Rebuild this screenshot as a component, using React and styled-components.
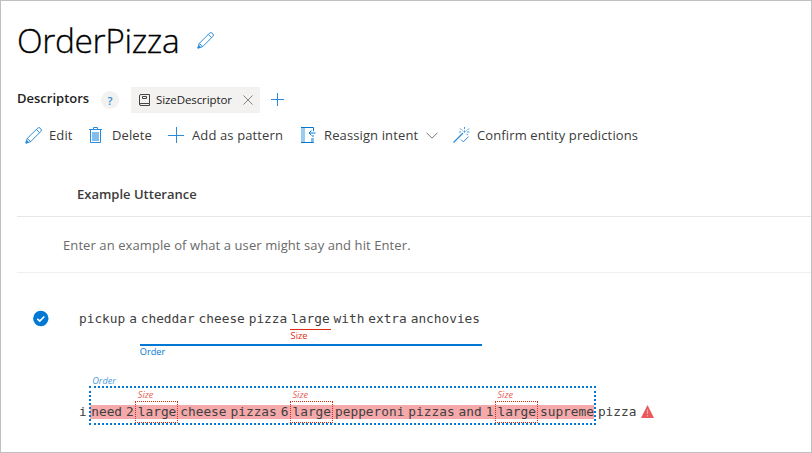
import React from 'react';
import styled, { createGlobalStyle, css } from 'styled-components';

const Global = createGlobalStyle`
  *, *::before, *::after { box-sizing: border-box; }
  body { margin: 0; background: #fff; }
`;

const BLUE = '#0078d4';
const SOFT_BLUE = '#2b8bdb';
const RED = '#dd2c14';

const Page = styled.main`
  width: 812px;
  height: 453px;
  border: 1px solid #c0c0c0;
  overflow: hidden;
  display: flex;
  flex-direction: column;
  font-family: 'Open Sans', 'Noto Sans', sans-serif;
  font-size: 13px;
  color: #3b3b3b;
  white-space: nowrap;
  svg { display: block; flex: none; }
`;

const Header = styled.header`
  height: 78px;
  padding-left: 16px;
  display: flex;
  align-items: center;
  gap: 18px;
`;

const Title = styled.h1`
  margin: 0;
  width: 162px;
  font-size: 33.5px;
  font-weight: 300;
  line-height: 44px;
  letter-spacing: -0.35px;
  color: #000;
  -webkit-text-stroke: 0.3px #000;
`;

const DescriptorRow = styled.div`
  height: 41px;
  padding-left: 16px;
  display: flex;
  align-items: center;
`;

const DescriptorTitle = styled.h2`
  margin: -4px 0 0;
  width: 84px;
  font-size: 13px;
  line-height: 20px;
  font-weight: 600;
  letter-spacing: 0;
  color: #222;
`;

const Help = styled.span`
  width: 18px;
  height: 18px;
  border-radius: 50%;
  background: #f3f2f1;
  color: #2b88d8;
  font-size: 11px;
  line-height: 19px;
  font-weight: 600;
  text-align: center;
`;

const Chip = styled.div`
  width: 129px;
  height: 26px;
  margin: 0 11px 0 12px;
  padding: 0 6px 0 8px;
  background: #f3f2f1;
  display: flex;
  align-items: center;
  color: #222;
`;

const ChipText = styled.span`
  width: 93px;
  padding-left: 6px;
  font-size: 11.5px;
  line-height: 18px;
  letter-spacing: -0.1px;
`;

const Toolbar = styled.nav`
  height: 32px;
  padding: 0 0 2px 24px;
  display: flex;
  align-items: center;
`;

const Command = styled.button`
  width: ${(p) => p.$width}px;
  height: 28px;
  padding: 0;
  border: 0;
  background: none;
  display: flex;
  align-items: center;
  gap: ${(p) => p.$gap}px;
  font: inherit;
  line-height: 20px;
  letter-spacing: 0.12px;
  color: #3b3b3b;
`;

const TableHead = styled.div`
  height: 65px;
  margin-left: 16px;
  padding: 32px 0 0 60px;
  border-bottom: 1px solid #e6e6e6;
  font-weight: 600;
  line-height: 20px;
`;

const InputRow = styled.div`
  height: 56px;
  margin-left: 16px;
  padding: 18px 0 0 46px;
  border-bottom: 1px solid #f0f0f0;
  line-height: 20px;
  letter-spacing: 0.09px;
  color: #6a6a6a;
`;

const UtteranceRow = styled.div`
  height: ${(p) => p.$height}px;
  padding: ${(p) => p.$top}px 0 0 31px;
  display: flex;
  align-items: flex-start;
`;

const Status = styled.div`
  width: 47px;
  height: 17px;
  display: flex;
  align-items: center;
`;

const Words = styled.div`
  --word-gap: ${(p) => p.$gap}px;
  display: flex;
  gap: var(--word-gap);
  font-family: 'DejaVu Sans Mono', monospace;
  font-size: 12.8px;
  line-height: 18px;
  color: #404040;
`;

const Entity = styled.span`
  position: relative;
  margin-left: ${(p) => p.$shift || 0}px;
  display: flex;
  gap: var(--word-gap);
`;

const Underline = styled.span`
  position: absolute;
  left: -1px;
  right: -1.5px;
  top: ${(p) => p.$top}px;
  border-top: ${(p) => p.$weight}px solid ${(p) => p.$color};
`;

const Tag = styled.span`
  position: absolute;
  left: ${(p) => p.$left || 0}px;
  top: ${(p) => p.$top}px;
  font-family: 'Open Sans', sans-serif;
  font-size: 9.2px;
  line-height: 12px;
  color: ${(p) => p.$color};
  ${(p) => p.$italic && css`font-style: italic; opacity: 0.75;`}
`;

const Highlight = styled.span`
  position: absolute;
  left: -1px;
  right: 0;
  top: 2px;
  height: 14px;
  background: #f5a9ab;
`;

const DottedBox = styled.span`
  position: absolute;
  left: -2.3px;
  right: ${(p) => p.$right}px;
  top: ${(p) => p.$top}px;
  height: ${(p) => p.$height}px;
  border: ${(p) => p.$weight}px dotted ${(p) => p.$color};
`;

const Word = styled.span`
  position: relative;
`;

const WarningSlot = styled.span`
  padding: 2px 0 0 1px;
`;

const Pencil = ({ size }) => (
  <svg width={size} height={size} viewBox="0 0 17 17" fill="none" stroke={SOFT_BLUE} strokeWidth="1">
    <path d="M.9 16.100L2.300 11.400 12.300 1.400a2.300 2.300 0 0 1 3.300 3.300L5.600 14.700zM2.300 11.400l3.300 3.300M11.300 2.400l3.300 3.300" />
    <path d="M.9 16.100l.8-2.600 1.800 1.800z" fill={BLUE} />
  </svg>
);

const Plus = ({ size }) => (
  <svg width={size} height={size} viewBox={`0 0 ${size} ${size}`} stroke={SOFT_BLUE}>
    <path d={`M${Math.floor(size / 2) + 0.5} 0v${size}M0 ${Math.floor(size / 2) + 0.5}h${size}`} />
  </svg>
);

const Book = () => (
  <svg width="11" height="12" viewBox="0 0 11 12" fill="none" stroke="#444">
    <path d="M10.500 9.500V.5H2Q.5.5.5 2v8q0 1.500 1.500 1.500h8.500M.5 10.500Q.5 9.500 2 9.500h8.500v2M3.500 2.500h4v2h-4z" />
  </svg>
);

const Close = () => (
  <svg width="10" height="10" viewBox="0 0 10 10" stroke="#777" strokeWidth=".9">
    <path d="M.5.5l9 9M9.500.5l-9 9" />
  </svg>
);

const Trash = () => (
  <svg width="13" height="16" viewBox="0 0 13 16" fill="none" stroke={SOFT_BLUE}>
    <path d="M0 2.500h13M4.500 2V.5h4V2M1.500 3v12.500h10V3" />
    <path d="M3 5h7v9H3z" fill="#83bdec" stroke="none" />
  </svg>
);

const Reassign = () => (
  <svg width="15" height="16" viewBox="0 0 15 16" fill="none" stroke={BLUE}>
    <path d="M0 0h4v16H0z" fill="#9ccbf0" stroke="none" />
    <path d="M0 .5h12.500V4M0 15.500h12.500V14M14.500 6H8M10.500 3.500L8 6l2.500 2.500" />
    <path d="M11 8h2v2h-2zM10 11h3v4h-3z" fill="#83bdec" stroke="none" />
  </svg>
);

const Chevron = () => (
  <svg width="12" height="7" viewBox="0 0 12 7" fill="none" stroke="#666" strokeWidth=".9">
    <path d="M.5.700l5.500 5.500L11.500.700" />
  </svg>
);

const Wand = () => (
  <svg width="17" height="16" viewBox="0 0 17 16" fill="none" stroke={SOFT_BLUE}>
    <path d="M.5 15.500L10 6" strokeWidth="1.200" />
    <path d="M8 12.500l2.300 2.300 5.200-5.200" />
    <path d="M11.500 0v2M7 1.500l1.500 1.500M16 1.500l-1.500 1.500M6 5h2M14 5h2.500M11.500 3.500v2M13.500 7l1.500 1M9.500 3.500l1 1M13.500 3.500l-1 1" strokeWidth=".9" />
  </svg>
);

const Check = () => (
  <svg width="17" height="17" viewBox="0 0 17 17">
    <circle cx="8.800" cy="8.500" r="7.700" fill={BLUE} />
    <path d="M5.300 8.800l2.500 2.300 4.500-4.600" fill="none" stroke="#fff" strokeWidth="1.700" />
  </svg>
);

const Warning = () => (
  <svg width="13" height="13" viewBox="0 0 13 13">
    <path d="M6.500 0L13 13H0z" fill="#e9585b" />
    <path d="M6.500 4.500v4.500M6.500 10v1.500" stroke="#f3a0a0" strokeWidth="1.300" />
  </svg>
);

const Plain = ({ text }) => text.split(' ').map((w, i) => <Word key={i}>{w}</Word>);

const PredictedSize = () => (
  <Entity>
    <DottedBox $right={-2} $top={-2} $height={22} $weight={1} $color={RED} />
    <Tag $top={-14} $color={RED} $italic>Size</Tag>
    <Word>large</Word>
  </Entity>
);

export default function App() {
  return (
    <Page>
      <Global />
      <Header>
        <Title>OrderPizza</Title>
        <Pencil size={17} />
      </Header>
      <DescriptorRow>
        <DescriptorTitle>Descriptors</DescriptorTitle>
        <Help>?</Help>
        <Chip>
          <Book />
          <ChipText>SizeDescriptor</ChipText>
          <Close />
        </Chip>
        <Plus size={13} />
      </DescriptorRow>
      <Toolbar>
        <Command $width={64} $gap={7}><Pencil size={17} />Edit</Command>
        <Command $width={79} $gap={10}><Trash />Delete</Command>
        <Command $width={133} $gap={8}><Plus size={16} />Add as pattern</Command>
        <Command $width={152} $gap={8}><Reassign />Reassign intent<Chevron /></Command>
        <Command $width={200} $gap={7}><Wand />Confirm entity predictions</Command>
      </Toolbar>
      <TableHead>Example Utterance</TableHead>
      <InputRow>Enter an example of what a user might say and hit Enter.</InputRow>
      <UtteranceRow $height={93} $top={37}>
        <Status><Check /></Status>
        <Words $gap={3.9}>
          <Plain text="pickup a" />
          <Entity>
            <Underline $top={34} $weight={2} $color={BLUE} />
            <Tag $top={36} $left={-1} $color={BLUE}>Order</Tag>
            <Plain text="cheddar cheese pizza" />
            <Entity>
              <Underline $top={19} $weight={1} $color={RED} />
              <Tag $top={20} $left={-0.5} $color={RED}>Size</Tag>
              <Word>large</Word>
            </Entity>
            <Plain text="with extra anchovies" />
          </Entity>
        </Words>
      </UtteranceRow>
      <UtteranceRow $height={86} $top={37}>
        <Status />
        <Words $gap={4}>
          <Word>i</Word>
          <Entity $shift={0.5}>
            <Highlight />
            <DottedBox $right={-1.7} $top={-17} $height={39} $weight={2} $color={BLUE} />
            <Tag $top={-28} $left={1} $color={BLUE} $italic>Order</Tag>
            <Plain text="need 2" />
            <PredictedSize />
            <Plain text="cheese pizzas 6" />
            <PredictedSize />
            <Plain text="pepperoni pizzas and 1" />
            <PredictedSize />
            <Plain text="supreme" />
          </Entity>
          <Word>pizza</Word>
          <WarningSlot><Warning /></WarningSlot>
        </Words>
      </UtteranceRow>
    </Page>
  );
}
